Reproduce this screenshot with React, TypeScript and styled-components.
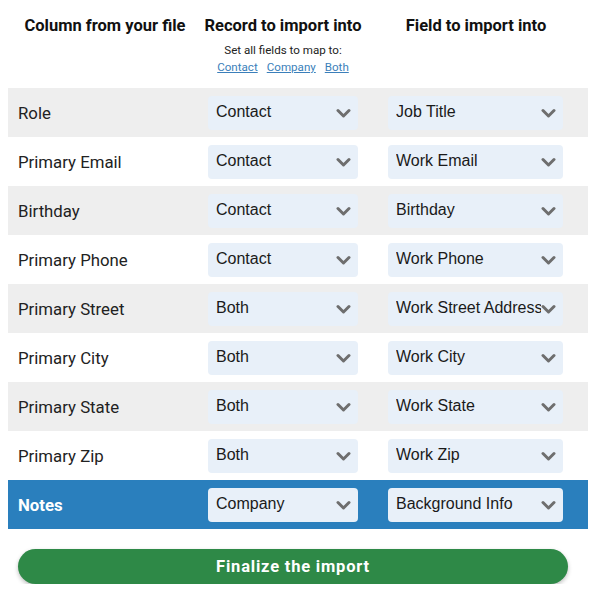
import React from "react";
import styled, { createGlobalStyle } from "styled-components";

const Global = createGlobalStyle`
  body {
    margin: 8px;
    background: #ffffff;
    font-family: Roboto, "Liberation Sans", Arial, sans-serif;
    color: #222;
  }
`;

const Wrapper = styled.div`
  width: 580px;
`;

const Header = styled.div`
  display: grid;
  grid-template-columns: 194px 162px 1fr;
  height: 80px;
  padding-top: 8px;
  box-sizing: border-box;
`;

const HeaderCell = styled.div`
  display: flex;
  flex-direction: column;
  align-items: center;
`;

const Title = styled.div`
  font-family: Roboto, sans-serif;
  font-weight: 700;
  font-size: 16.5px;
  line-height: 20px;
  color: #111;
  white-space: nowrap;
`;

const Hint = styled.div`
  font-family: Roboto, sans-serif;
  font-size: 11.6px;
  line-height: 14px;
  color: #222;
  margin-top: 7px;
`;

const Links = styled.div`
  display: flex;
  gap: 9px;
  margin-top: 3px;
`;

const MapLink = styled.a`
  font-family: Roboto, sans-serif;
  font-size: 11.6px;
  line-height: 14px;
  color: #3b7fba;
  text-decoration: underline;
  cursor: pointer;
`;

const Row = styled.div<{ $variant: "gray" | "white" | "blue" }>`
  display: grid;
  grid-template-columns: 192px 180px 1fr;
  align-items: center;
  height: 49px;
  width: ${(p) => (p.$variant === "blue" ? "588px" : "580px")};
  background: ${(p) =>
    p.$variant === "gray" ? "#eeeeee" : p.$variant === "blue" ? "#2a7fbd" : "#ffffff"};
`;

const Label = styled.div<{ $active?: boolean }>`
  padding-left: 10px;
  font-family: Roboto, sans-serif;
  font-size: 16.8px;
  font-weight: ${(p) => (p.$active ? 700 : 400)};
  color: ${(p) => (p.$active ? "#ffffff" : "#222")};
`;

const Select = styled.div<{ $width: number }>`
  display: flex;
  align-items: center;
  width: ${(p) => p.$width}px;
  height: 34px;
  margin-left: 8px;
  box-sizing: border-box;
  padding-left: 8px;
  padding-right: 7px;
  background: #e8f0f9;
  border-radius: 4px;
  font-family: "Liberation Sans", Arial, sans-serif;
  font-size: 16px;
  color: #1a1a1a;
`;

const SelectText = styled.span`
  flex: 1;
  min-width: 0;
  overflow: hidden;
  white-space: nowrap;
  margin-top: -2px;
`;

const Chevron = styled.svg`
  flex: none;
  width: 15px;
  height: 14px;
`;

const Footer = styled.div`
  padding-top: 20px;
  padding-left: 10px;
`;

const FinalButton = styled.button`
  width: 550px;
  height: 35px;
  border: none;
  border-radius: 18px;
  background: #2e8947;
  color: #ffffff;
  font-family: Roboto, sans-serif;
  font-weight: 700;
  font-size: 16.5px;
  letter-spacing: 0.8px;
  box-shadow: 0 2px 4px rgba(0, 0, 0, 0.25);
  cursor: pointer;
`;

const ChevronIcon = () => (
  <Chevron viewBox="0 0 15 14">
    <path d="M2 4.5 L7.5 10 L13 4.5" fill="none" stroke="#6e6e6e" strokeWidth="3" strokeLinecap="round" strokeLinejoin="round" />
  </Chevron>
);

const FieldSelect = ({ value, width }: { value: string; width: number }) => (
  <Select $width={width}>
    <SelectText>{value}</SelectText>
    <ChevronIcon />
  </Select>
);

const rows: [string, string, string][] = [
  ["Role", "Contact", "Job Title"],
  ["Primary Email", "Contact", "Work Email"],
  ["Birthday", "Contact", "Birthday"],
  ["Primary Phone", "Contact", "Work Phone"],
  ["Primary Street", "Both", "Work Street Address"],
  ["Primary City", "Both", "Work City"],
  ["Primary State", "Both", "Work State"],
  ["Primary Zip", "Both", "Work Zip"],
];

export default function App() {
  return (
    <>
      <Global />
      <Wrapper>
        <Header>
          <HeaderCell>
            <Title>Column from your file</Title>
          </HeaderCell>
          <HeaderCell>
            <Title>Record to import into</Title>
            <Hint>Set all fields to map to:</Hint>
            <Links>
              <MapLink>Contact</MapLink>
              <MapLink>Company</MapLink>
              <MapLink>Both</MapLink>
            </Links>
          </HeaderCell>
          <HeaderCell>
            <Title>Field to import into</Title>
          </HeaderCell>
        </Header>
        {rows.map(([label, record, field], i) => (
          <Row key={label} $variant={i % 2 === 0 ? "gray" : "white"}>
            <Label>{label}</Label>
            <FieldSelect value={record} width={150} />
            <FieldSelect value={field} width={175} />
          </Row>
        ))}
        <Row $variant="blue">
          <Label $active>Notes</Label>
          <FieldSelect value="Company" width={150} />
          <FieldSelect value="Background Info" width={175} />
        </Row>
        <Footer>
          <FinalButton>Finalize the import</FinalButton>
        </Footer>
      </Wrapper>
    </>
  );
}
